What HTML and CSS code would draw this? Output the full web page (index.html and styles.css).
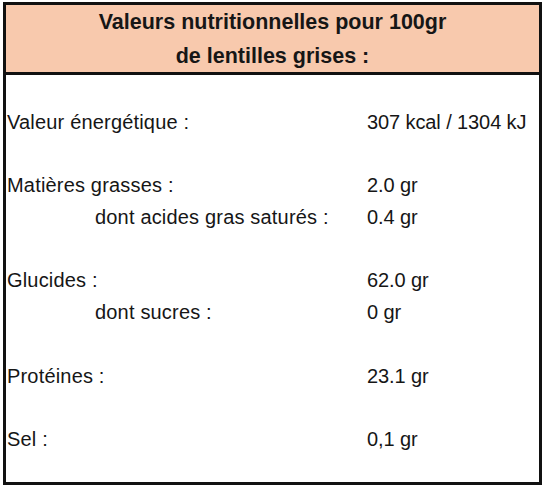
FILE: index.html
```html
<!DOCTYPE html>
<html lang="fr">
<head>
<meta charset="utf-8">
<link rel="stylesheet" href="styles.css">
</head>
<body>
<div class="panel">
  <div class="head">
    <div class="head-line">Valeurs nutritionnelles pour 100gr</div>
    <div class="head-line">de lentilles grises :</div>
  </div>
  <div class="body">
    <div class="row"></div>
    <div class="row"><span class="lab">Valeur énergétique :</span><span class="val">307 kcal / 1304 kJ</span></div>
    <div class="row"></div>
    <div class="row"><span class="lab">Matières grasses :</span><span class="val">2.0 gr</span></div>
    <div class="row"><span class="lab sub">dont acides gras saturés :</span><span class="val">0.4 gr</span></div>
    <div class="row"></div>
    <div class="row"><span class="lab">Glucides :</span><span class="val">62.0 gr</span></div>
    <div class="row"><span class="lab sub">dont sucres :</span><span class="val">0 gr</span></div>
    <div class="row"></div>
    <div class="row"><span class="lab">Protéines :</span><span class="val">23.1 gr</span></div>
    <div class="row"></div>
    <div class="row"><span class="lab">Sel :</span><span class="val">0,1 gr</span></div>
    <div class="row last"></div>
  </div>
</div>
</body>
</html>
```
FILE: styles.css
```css
html, body {
  margin: 0;
  padding: 0;
  background: #ffffff;
}
body {
  padding: 2px 2px 2px 3px;
  font-family: "Liberation Sans", Arial, sans-serif;
  color: #161616;
}
.panel {
  width: 533px;
  height: 477px;
  border: 3px solid #111111;
  display: flex;
  flex-direction: column;
}
.head {
  background: #f8c9ad;
  height: 67px;
  border-bottom: 3px solid #111111;
  display: flex;
  flex-direction: column;
  justify-content: center;
}
.head-line {
  text-align: center;
  font-weight: bold;
  font-size: 21.5px;
  line-height: 34px;
  height: 34px;
}
.body {
  flex: 1;
  display: flex;
  flex-direction: column;
}
.row {
  height: 31.7px;
  display: grid;
  grid-template-columns: 361px 1fr;
  align-items: center;
  font-size: 20px;
}
.row.last {
  flex: 1;
}
.lab {
  padding-left: 1px;
  letter-spacing: 0.18px;
}
.val {
  letter-spacing: -0.1px;
}
.lab.sub {
  padding-left: 89px;
}
```
